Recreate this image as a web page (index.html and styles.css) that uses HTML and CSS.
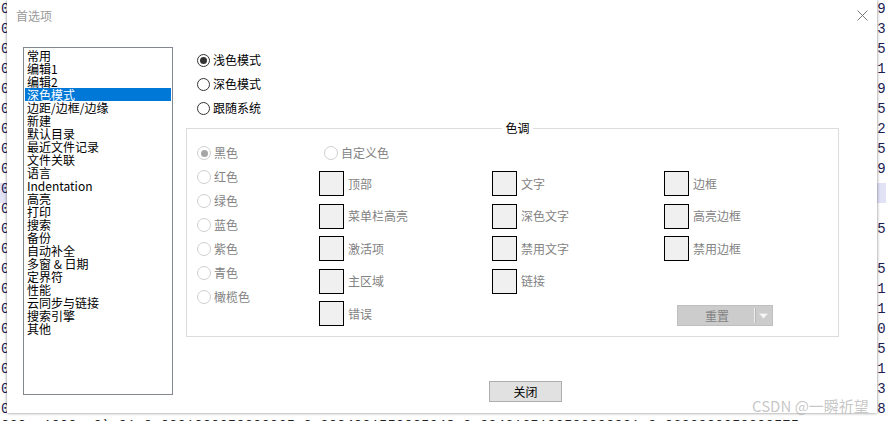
FILE: index.html
```html
<!DOCTYPE html>
<html lang="zh-CN">
<head>
<meta charset="utf-8">
<title>首选项</title>
<link rel="stylesheet" href="styles.css">
</head>
<body>
<div class="editor">
  <div class="ln"><span>0 0.000123 0.0002 1000 0.0003</span><span class="rt">9<i>.</i></span></div>
  <div class="ln"><span>0 0.000124 0.0002 1000 0.0003</span><span class="rt">3<i>.</i></span></div>
  <div class="ln"><span>0 0.000125 0.0002 1000 0.0003</span><span class="rt">5<i>.</i></span></div>
  <div class="ln"><span>0 0.000126 0.0002 1000 0.0003</span><span class="rt">1<i>.</i></span></div>
  <div class="ln"><span>0 0.000127 0.0002 1000 0.0003</span><span class="rt">9<i>.</i></span></div>
  <div class="ln"><span>0 0.000128 0.0002 1000 0.0003</span><span class="rt">5<i>.</i></span></div>
  <div class="ln"><span>0 0.000129 0.0002 1000 0.0003</span><span class="rt">2<i>.</i></span></div>
  <div class="ln"><span>0 0.000130 0.0002 1000 0.0003</span><span class="rt">5<i>.</i></span></div>
  <div class="ln"><span>0 0.000131 0.0002 1000 0.0003</span><span class="rt">9<i>.</i></span></div>
  <div class="ln cur"><span>0 0.000132 0.0002 1000 0.0003</span><span class="rt"></span></div>
  <div class="ln"><span>0 0.000133 0.0002 1000 0.0003</span><span class="rt"></span></div>
  <div class="ln"><span>0 0.000134 0.0002 1000 0.0003</span><span class="rt">5<i>.</i></span></div>
  <div class="ln"><span>0 0.000135 0.0002 1000 0.0003</span><span class="rt"></span></div>
  <div class="ln"><span>0 0.000136 0.0002 1000 0.0003</span><span class="rt">5<i>.</i></span></div>
  <div class="ln"><span>0 0.000137 0.0002 1000 0.0003</span><span class="rt">1<i>.</i></span></div>
  <div class="ln"><span>0 0.000138 0.0002 1000 0.0003</span><span class="rt">1<i>.</i></span></div>
  <div class="ln"><span>0 0.000139 0.0002 1000 0.0003</span><span class="rt">0<i>.</i></span></div>
  <div class="ln"><span>0 0.000140 0.0002 1000 0.0003</span><span class="rt">5<i>.</i></span></div>
  <div class="ln"><span>0 0.000141 0.0002 1000 0.0003</span><span class="rt">1<i>.</i></span></div>
  <div class="ln"><span>0 0.000142 0.0002 1000 0.0003</span><span class="rt">3<i>.</i></span></div>
  <div class="ln"><span>0 0.000143 0.0002 1000 0.0003</span><span class="rt">8<i>.</i></span></div>
  <div class="ln last"><span>000  1000  0) 01 0 0001000050000065 0 0004001550005048 0 0046165100500000021 0 0600000050000575</span></div>
</div>

<div class="dialog">
  <div class="titlebar">
    <span class="title">首选项</span>
    <svg class="close" width="11" height="11" viewBox="0 0 11 11"><path d="M0.5 0.5L10.5 10.5M10.5 0.5L0.5 10.5" stroke="#7a7a7a" stroke-width="1" fill="none"/></svg>
  </div>
  <div class="body">
    <ul class="nav">
      <li>常用</li>
      <li>编辑1</li>
      <li>编辑2</li>
      <li class="sel">深色模式</li>
      <li>边距/边框/边缘</li>
      <li>新建</li>
      <li>默认目录</li>
      <li>最近文件记录</li>
      <li>文件关联</li>
      <li>语言</li>
      <li>Indentation</li>
      <li>高亮</li>
      <li>打印</li>
      <li>搜索</li>
      <li>备份</li>
      <li>自动补全</li>
      <li>多窗 &amp; 日期</li>
      <li>定界符</li>
      <li>性能</li>
      <li>云同步与链接</li>
      <li>搜索引擎</li>
      <li>其他</li>
    </ul>
    <div class="panel">
      <div class="modes">
        <div class="opt"><span class="radio on"></span><span>浅色模式</span></div>
        <div class="opt"><span class="radio"></span><span>深色模式</span></div>
        <div class="opt"><span class="radio"></span><span>跟随系统</span></div>
      </div>
      <fieldset class="tone">
        <legend>色调</legend>
        <div class="tone-inner">
          <div class="presets">
            <div class="opt dis"><span class="radio on"></span><span>黑色</span></div>
            <div class="opt dis"><span class="radio"></span><span>红色</span></div>
            <div class="opt dis"><span class="radio"></span><span>绿色</span></div>
            <div class="opt dis"><span class="radio"></span><span>蓝色</span></div>
            <div class="opt dis"><span class="radio"></span><span>紫色</span></div>
            <div class="opt dis"><span class="radio"></span><span>青色</span></div>
            <div class="opt dis"><span class="radio"></span><span>橄榄色</span></div>
          </div>
          <div class="custom">
            <div class="opt dis custom-opt"><span class="radio"></span><span>自定义色</span></div>
            <div class="swatches">
              <div class="sw"><span class="box"></span><span>顶部</span></div>
              <div class="sw"><span class="box"></span><span>文字</span></div>
              <div class="sw"><span class="box"></span><span>边框</span></div>
              <div class="sw"><span class="box"></span><span>菜单栏高亮</span></div>
              <div class="sw"><span class="box"></span><span>深色文字</span></div>
              <div class="sw"><span class="box"></span><span>高亮边框</span></div>
              <div class="sw"><span class="box"></span><span>激活项</span></div>
              <div class="sw"><span class="box"></span><span>禁用文字</span></div>
              <div class="sw"><span class="box"></span><span>禁用边框</span></div>
              <div class="sw"><span class="box"></span><span>主区域</span></div>
              <div class="sw"><span class="box"></span><span>链接</span></div>
              <div class="sw"></div>
              <div class="sw"><span class="box"></span><span>错误</span></div>
              <div class="sw"></div>
              <div class="sw">
                <div class="reset">
                  <span class="reset-label">重置</span>
                  <span class="reset-sep"></span>
                  <svg class="reset-arrow" width="15" height="8" viewBox="0 0 15 8"><path d="M3 1.5H12L7.5 6.5Z" fill="#f6f6f6" stroke="#d8d8d8" stroke-width="0.6"/></svg>
                </div>
              </div>
            </div>
          </div>
        </div>
      </fieldset>
      <div class="footer">
        <button class="btn">关闭</button>
      </div>
    </div>
  </div>
</div>

<div class="watermark">CSDN @一瞬祈望</div>
</body>
</html>
```

FILE: styles.css
```css
html, body {
  margin: 0;
  padding: 0;
  width: 886px;
  height: 421px;
  overflow: hidden;
  background: #ffffff;
}

body {
  position: relative;
  font-family: "Noto Sans CJK SC", "Noto Sans", sans-serif;
  font-size: 12px;
}

/* editor window behind the dialog */
.editor {
  width: 894px;
  padding-top: 3px;
  font-family: "Liberation Mono", monospace;
  font-size: 14px;
  color: #1d1d52;
}

.ln {
  height: 20px;
  line-height: 12px;
  display: flex;
  justify-content: space-between;
  white-space: pre;
  padding-left: 1px;
}

.ln.cur {
  background: #e2e2f6;
}

.ln.last {
  margin-top: -3px;
  color: #222;
}

.rt i {
  font-style: normal;
  color: #f0a040;
}

/* dialog */
.dialog {
  position: absolute;
  left: 7px;
  top: 0;
  width: 870px;
  height: 413px;
  background: #ffffff;
  box-shadow: 0 0 3px rgba(0, 0, 0, 0.5);
  display: flex;
  flex-direction: column;
}

.titlebar {
  height: 32px;
  display: flex;
  align-items: center;
  justify-content: space-between;
  padding: 0 9px 0 9px;
}

.title {
  color: #9a9a9a;
  font-size: 12px;
  line-height: 16px;
}

.close {
  margin-top: -2px;
}

.body {
  display: flex;
  padding: 15px 0 0 16px;
}

.nav {
  list-style: none;
  margin: 0;
  padding: 1px;
  width: 150px;
  height: 348px;
  box-sizing: border-box;
  border: 1px solid #828790;
}

.nav li {
  height: 13px;
  line-height: 13px;
  padding-left: 2px;
  color: #000;
  white-space: nowrap;
}

.nav li.sel {
  background: #0078d7;
  color: #ffffff;
}

.panel {
  margin-left: 13px;
  width: 653px;
  padding-top: 1px;
}

.modes {
  padding-left: 11px;
}

.opt {
  height: 24px;
  display: flex;
  align-items: center;
  gap: 3px;
  color: #000;
  line-height: 16px;
}

.radio {
  width: 13px;
  height: 13px;
  box-sizing: border-box;
  border: 1px solid #333333;
  border-radius: 50%;
  background: #ffffff;
  display: flex;
  align-items: center;
  justify-content: center;
  flex: none;
}

.radio.on::after {
  content: "";
  width: 7px;
  height: 7px;
  border-radius: 50%;
  background: #333333;
}

.opt.dis {
  color: #838383;
}

.opt.dis .radio {
  width: 14px;
  height: 14px;
  border-color: #cfcfcf;
}

.opt.dis .radio.on::after {
  background: #a6a6a6;
}

.tone {
  margin: 0;
  padding: 0 0 10px 10px;
  border: 1px solid #dcdcdc;
  min-width: 0;
  box-sizing: border-box;
  width: 653px;
}

.tone legend {
  margin: 0 auto;
  padding: 0 3px;
  font-size: 12px;
  line-height: 16px;
  color: #000;
}

.tone-inner {
  display: flex;
  padding-top: 5px;
}

.presets {
  width: 122px;
  flex: none;
}

.custom {
  flex: 1;
}

.custom-opt {
  padding-left: 5px;
}

.swatches {
  margin-top: 6px;
  display: grid;
  grid-template-columns: 173px 172px 1fr;
  grid-auto-rows: 25px;
  row-gap: 7.5px;
}

.sw {
  display: flex;
  align-items: center;
  gap: 4px;
  color: #838383;
  line-height: 16px;
}

.box {
  width: 25px;
  height: 25px;
  box-sizing: border-box;
  border: 1px solid #000;
  background: #f0f0f0;
  flex: none;
}

.reset {
  align-self: flex-end;
  margin-left: 13px;
  width: 96px;
  height: 21px;
  box-sizing: border-box;
  background: #cccccc;
  border: 1px solid #bfbfbf;
  display: flex;
  align-items: center;
  color: #838383;
}

.reset-label {
  flex: 1;
  text-align: center;
  padding-left: 2px;
}

.reset-sep {
  width: 1px;
  height: 15px;
  background: #eeeeee;
  box-shadow: 1px 0 0 #b8b8b8;
}

.reset-arrow {
  margin: 0 1px 0 1px;
}

.footer {
  padding: 44px 0 0 303px;
}

.btn {
  width: 73px;
  height: 21px;
  box-sizing: border-box;
  border: 1px solid #adadad;
  background: #e1e1e1;
  font-family: "Noto Sans CJK SC", "Noto Sans", sans-serif;
  font-size: 12px;
  line-height: 16px;
  color: #000;
  padding: 0;
}

.watermark {
  position: absolute;
  left: 752px;
  top: 397px;
  font-family: "Noto Sans CJK SC", "Noto Sans", sans-serif;
  font-size: 15px;
  line-height: 18px;
  color: rgba(150, 150, 150, 0.55);
  white-space: nowrap;
}
```
